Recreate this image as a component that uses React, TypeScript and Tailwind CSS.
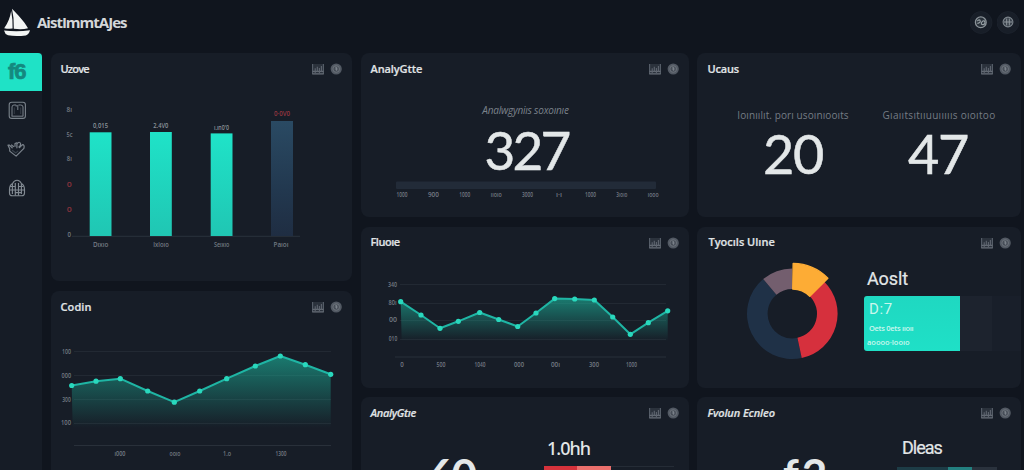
import React from "react";

type Point = [number, number];

const CardIcons = () => (
  <svg width="30" height="12" viewBox="0 0 30 12" className="shrink-0">
    <path d="M0 1h12v10.5H0Z" fill="#2b323c" />
    <path d="M.6 1v10M11.4 1v10" stroke="#58606a" strokeWidth="1.1" />
    <path d="M.5 8.4h11M.3 10.9h11.4" stroke="#646b74" strokeWidth="1.1" />
    <path d="M3.2 10V5.2M5.3 9V3.8M7.4 10V5M9.4 9V3" stroke="#5f6670" strokeWidth="1.1" />
    <circle cx="24.2" cy="6" r="5.6" fill="#525963" />
    <circle cx="24.2" cy="6" r="3.3" fill="#474e58" stroke="#737a82" strokeWidth=".8" />
    <path d="M23.2 4.2h1.4v3.6M23 6h2.6" stroke="#868d94" strokeWidth=".8" fill="none" />
  </svg>
);

function Card({
  title,
  className = "",
  titleClass = "",
  children,
}: {
  title: string;
  className?: string;
  titleClass?: string;
  children: React.ReactNode;
}) {
  return (
    <section className={`flex shrink-0 flex-col overflow-hidden rounded-lg bg-[#171d27] ${className}`}>
      <header className="flex h-8 shrink-0 items-center justify-between pr-[10px] pl-[9.5px]">
        <h2 className={`font-['Open_Sans',sans-serif] text-[11px] leading-4 font-semibold whitespace-nowrap text-[#e0e4e6] [-webkit-text-stroke:0.2px_#e0e4e6] ${titleClass}`}>
          {title}
        </h2>
        <CardIcons />
      </header>
      {children}
    </section>
  );
}

function Label({
  x,
  y,
  w,
  children,
  fill = "#737a83",
}: {
  x: number;
  y: number;
  w: number;
  children: string;
  fill?: string;
}) {
  return (
    <text
      x={x - w / 2}
      y={y + 2.3}
      textLength={w}
      lengthAdjust="spacingAndGlyphs"
      fontSize="6.5"
      fontWeight="600"
      fontFamily="Open Sans, sans-serif"
      fill={fill}
    >
      {children}
    </text>
  );
}

function AreaLine({ points, base, id }: { points: Point[]; base: number; id: string }) {
  const line = points.map((p) => p.join(",")).join(" ");
  const first = points[0][0] + 1;
  const last = points[points.length - 1][0];
  const top = Math.min(...points.map((p) => p[1]));
  return (
    <g>
      <defs>
        <linearGradient id={id} gradientUnits="userSpaceOnUse" x1="0" x2="0" y1={top} y2={base}>
          <stop offset="0" stopColor="#1cb89f" stopOpacity=".6" />
          <stop offset=".55" stopColor="#1cb89f" stopOpacity=".27" />
          <stop offset="1" stopColor="#1cb89f" stopOpacity="0" />
        </linearGradient>
      </defs>
      <polygon points={`${first},${base} ${line} ${last},${base}`} fill={`url(#${id})`} />
      <polyline points={line} fill="none" stroke="#1fb5a4" strokeWidth="2" strokeLinejoin="round" />
      {points.map(([x, y]) => (
        <circle key={x} cx={x} cy={y} r="2.6" fill="#29d8bd" />
      ))}
    </g>
  );
}

const bars = [
  { x: 89.7, y: 132.3, value: "0,015", label: "Dıxıo" },
  { x: 150, y: 132, value: "2.4V0", label: "Ixloıo" },
  { x: 210.7, y: 133.4, value: "ı.ın0'0", label: "Seıxıo" },
];

function BarChart() {
  return (
    <svg width="301" height="196" viewBox="51 85 301 196">
      <defs>
        <linearGradient id="teal" x1="0" x2="0" y1="0" y2="1">
          <stop offset="0" stopColor="#1fe3c8" />
          <stop offset="1" stopColor="#20c6b3" />
        </linearGradient>
        <linearGradient id="navy" x1="0" x2="0" y1="0" y2="1">
          <stop offset="0" stopColor="#2a4a63" />
          <stop offset=".6" stopColor="#22384f" />
          <stop offset="1" stopColor="#1f2d42" />
        </linearGradient>
      </defs>
      <path d="M72 236.3H300" stroke="#2a323d" />
      <Label x={69.3} y={109.8} w={5.5}>8ı</Label>
      <Label x={69.5} y={134.4} w={6}>5c</Label>
      <Label x={69.3} y={158.8} w={5}>8ı</Label>
      <Label x={69.3} y={184.6} w={5} fill="#87323c">0</Label>
      <Label x={69.3} y={209.8} w={5} fill="#87323c">0</Label>
      <Label x={69.3} y={235} w={3.5}>0</Label>
      {bars.map((b) => (
        <g key={b.x}>
          <rect x={b.x} y={b.y} width="21.8" height={236 - b.y} fill="url(#teal)" />
          <Label x={b.x + 10.8} y={b.y - 6.2} w={15} fill="#8b9299">{b.value}</Label>
          <Label x={b.x + 11} y={244.6} w={15.5}>{b.label}</Label>
        </g>
      ))}
      <rect x="271" y="121" width="22" height="115" fill="url(#navy)" />
      <Label x={282} y={113.3} w={16} fill="#943640">0·0V0</Label>
      <Label x={281} y={244.6} w={15}>Paıoı</Label>
    </svg>
  );
}

const codinPoints: Point[] = [
  [71.7, 385.5], [96, 381.2], [120.3, 378.7], [147.7, 391], [174.3, 402.2], [199.7, 391],
  [226.7, 378.7], [255.3, 366], [280.3, 356], [305.3, 364.7], [330.7, 374.3],
];

function CodinChart() {
  return (
    <svg width="301" height="147" viewBox="51 323 301 147">
      <path d="M74 351.5H331M74 375.5H331M74 399.5H331M74 423.5H331" stroke="#222933" />
      <path d="M74 445.5H331" stroke="#29303a" />
      <AreaLine points={codinPoints} base={428} id="codin-area" />
      <Label x={66.5} y={351.3} w={9}>100</Label>
      <Label x={66.3} y={375.3} w={9.5}>000</Label>
      <Label x={66.5} y={399.3} w={8.5}>300</Label>
      <Label x={66} y={423} w={10}>100</Label>
      <Label x={120} y={453.5} w={11}>ı000</Label>
      <Label x={175} y={453.5} w={11}>ooıo</Label>
      <Label x={227} y={453.5} w={8}>1.o</Label>
      <Label x={281} y={453.5} w={11}>1300</Label>
    </svg>
  );
}

const fluorePoints: Point[] = [
  [400.7, 301.7], [421, 315], [440, 328.3], [458.3, 321.3], [479.7, 312.5], [498.7, 319.5],
  [517.7, 326.5], [536, 313], [554.7, 298.6], [574.7, 299], [594.3, 300], [612.7, 317],
  [630.3, 334.3], [648.3, 322.7], [667.7, 310.8],
];

function FluoreChart() {
  return (
    <svg width="328" height="129" viewBox="361 259 328 129">
      <path d="M400 284.5H666M400 303.5H666M400 320.5H666M400 339.5H666" stroke="#222933" />
      <path d="M395 357H666" stroke="#232a34" strokeWidth="1.5" />
      <AreaLine points={fluorePoints} base={341} id="fluore-area" />
      <Label x={392.5} y={284.7} w={9}>340</Label>
      <Label x={392.5} y={302.7} w={8}>80ı</Label>
      <Label x={393} y={319.7} w={8}>00</Label>
      <Label x={393} y={338.7} w={8.5}>010</Label>
      <Label x={402} y={364.6} w={3.5}>0</Label>
      <Label x={441} y={364.6} w={9}>500</Label>
      <Label x={480} y={364.6} w={11}>1040</Label>
      <Label x={519} y={364.6} w={10}>000</Label>
      <Label x={555.5} y={364.6} w={9}>00ı</Label>
      <Label x={594} y={364.6} w={10}>300</Label>
      <Label x={631.5} y={364.6} w={11}>1000</Label>
    </svg>
  );
}

function arc(from: number, to: number, outer: number, inner = 24.7) {
  const at = (deg: number, r: number) => {
    const a = (deg * Math.PI) / 180;
    return `${46.3 + r * Math.sin(a)} ${51.7 - r * Math.cos(a)}`;
  };
  const large = to - from > 180 ? 1 : 0;
  return `M${at(from, outer)}A${outer} ${outer} 0 ${large} 1 ${at(to, outer)}L${at(to, inner)}A${inner} ${inner} 0 ${large} 0 ${at(from, inner)}Z`;
}

function Donut() {
  return (
    <svg width="94" height="100" viewBox="0 0 94 100">
      <path d={arc(168, 320, 45.3)} fill="#1f3147" />
      <path d={arc(320, 360, 45.3)} fill="#735e6e" />
      <path d={arc(45, 168, 45.3)} fill="#d6303d" />
      <path d={arc(1, 45, 50.3)} fill="#fdac35" stroke="#fdac35" strokeWidth="1.4" strokeLinejoin="round" />
    </svg>
  );
}

const ticks = ["1000", "900", "1000", "ııoıo", "3000", "ı·ı", "1000", "3ıoıo", "ıooo"];

export default function App() {
  return (
    <div className="flex h-[470px] w-[1024px] flex-col overflow-hidden bg-[#10151e] font-['Open_Sans',sans-serif] text-[#e3e7e8]">
      <header className="flex h-[53px] shrink-0 items-start justify-between pt-[8px] pr-[4px] pl-[3px]">
        <div className="flex items-center">
          <svg width="28" height="29" viewBox="0 0 28 29">
            <path d="M9 .8C14 6 21 13 25 20.3Q19 22 10.8 20.8Q11.2 10 9 .8Z" fill="#f3f5f4" />
            <path d="M8.2 3Q10 13 9.6 20.6Q5 21 1.2 20.2Q6.5 13 8.2 3Z" fill="#f3f5f4" />
            <path d="M1 22.4Q14 24 27 22.2Q25.8 26.5 22.8 27.4Q12.5 28.6 5 27.2Q1.8 26 1 22.4Z" fill="#f3f5f4" />
          </svg>
          <h1 className="-mt-[2px] ml-[6px] text-[15px] leading-5 font-bold tracking-[-1px] text-[#d4d7d9]">AistImmtAJes</h1>
        </div>
        <div className="flex gap-[4px] pt-[3px]">
          <svg width="23" height="23" viewBox="0 0 23 23">
            <circle cx="11" cy="11.5" r="11" fill="#181e28" stroke="#202630" strokeWidth=".6" />
            <circle cx="10.8" cy="11.3" r="5.4" fill="#29313a" stroke="#8b9399" strokeWidth="1.3" />
            <path d="M7.3 10.2c1.5-2 2.8-1.5 3 .2s-2 1.5-3 2M11.3 13.3c0-3 3-4.8 3.6-2.2s-2 2.8-3.6 2.2" fill="none" stroke="#969fa4" strokeWidth="1.2" />
          </svg>
          <svg width="23" height="23" viewBox="0 0 23 23">
            <circle cx="11" cy="11.5" r="11" fill="#181e28" stroke="#202630" strokeWidth=".6" />
            <circle cx="11" cy="11" r="4.9" fill="#39414b" stroke="#7e868d" strokeWidth="1.1" />
            <path d="M7 11h8M9.7 7.5v7M12.3 7.5v7" stroke="#8e969c" strokeWidth="1" fill="none" />
          </svg>
        </div>
      </header>

      <div className="flex min-h-0 flex-1">
        <nav className="flex w-[42px] shrink-0 flex-col bg-[#161c26]">
          <div className="flex h-[38px] items-center rounded-tr bg-[#1fe2c6] pl-[8px]">
            <span className="font-['Liberation_Sans',sans-serif] text-[22px] leading-6 font-bold tracking-[-1px] text-[#14897f] [-webkit-text-stroke:0.7px_#14897f]">f6</span>
          </div>
          <div className="flex h-[39px] items-center pl-[8px]">
            <svg width="19" height="19" viewBox="0 0 19 19" fill="none" stroke="#7a828b">
              <rect x="1.2" y="1.2" width="16.2" height="16.2" rx="2.5" strokeWidth="1.1" />
              <path d="M4 15V6Q4 4 6 4h2.2v1.6M10.5 4h2.2Q15 4 15 6v9M3.5 15.2h11.8M9.8 4v5" strokeWidth="1" />
              <path d="M6.3 13V6.5M12.7 13V6.5" stroke="#353d47" />
            </svg>
          </div>
          <div className="flex h-[39px] items-center pl-[7px]">
            <svg width="19" height="18" viewBox="0 0 19 18" fill="none" stroke="#7a828b" strokeWidth="1.2" strokeLinecap="round" strokeLinejoin="round" className="-mt-[2px]">
              <path d="M1 5.2l1.7 3.6v2.3l6.4 5 7.8-7.8Q17.8 4.8 15.5 4.7l-3 3M1 5.2h1.5l2.7 2.6M4.5 5l2 1.5M8 6.3V3.6l1.7-.8M9.9 7.8V4q2.5-3.2 3.6-.6Q14 6 11.8 7" />
              <path d="M5.5 10.5l3.3 2.4 2-1.8" stroke="#38414b" />
            </svg>
          </div>
          <div className="flex h-[39px] items-center pl-[8px]">
            <svg width="18" height="18" viewBox="0 0 18 18" fill="none" stroke="#828a92" strokeWidth="1.15" className="-mt-[2px]">
              <path d="M1.5 10.5Q1.4 6 4.7 4.4Q6 1.2 9 1.2t4.3 3.2Q16.5 6 16.5 10.5v3.4q0 2.8-2.8 2.8H4.3q-2.8 0-2.8-2.8Z" />
              <path d="M4.4 5v10M7.3 4v12.5M10.5 4v12.5M13.4 5v10M2 7.5h5.2M10.5 7.5h5M2 11h14M7.3 13.6h6" />
            </svg>
          </div>
        </nav>

        <main className="flex min-w-0 flex-1 items-start overflow-hidden pl-[9px]">
          <div className="mr-[9px] flex w-[301px] flex-col gap-[10px]">
            <Card title="Uzove" className="h-[228px]" titleClass="tracking-[-0.8px]">
              <BarChart />
            </Card>
            <Card title="Codin" className="h-[190px]" titleClass="tracking-[0.1px]">
              <CodinChart />
            </Card>
          </div>

          <div className="mr-[8px] flex w-[328px] flex-col">
            <Card title="AnalyGtte" className="h-[164px]" titleClass="tracking-[-0.1px]">
              <div className="flex flex-col items-center">
                <p className="mt-[18px] ml-[1px] text-[10px] leading-[14px] font-medium tracking-[-0.2px] text-[#7b828b] italic">Analwgyniıs soxoınıe</p>
                <p className="mt-[3px] ml-[3px] h-[60px] font-['Lato',sans-serif] text-[53px] leading-[60px] tracking-[-2.8px] [-webkit-text-stroke:0.5px_#e3e7e8]">327</p>
              </div>
              <svg width="328" height="30" viewBox="361 178 328 30">
                <rect x="396" y="179.5" width="260" height="7.5" rx="1" fill="#222b38" />
                {ticks.map((t, i) => (
                  <Label key={i} x={402 + i * 31.4} y={192.5} w={i === 5 ? 6 : 11}>{t}</Label>
                ))}
              </svg>
            </Card>
            <Card title="Fluoıe" className="mt-[10px] h-[161px]" titleClass="tracking-[-0.5px] -mt-[2px]">
              <FluoreChart />
            </Card>
            <Card title="AnalyGtıe" className="mt-[9px] h-[100px]" titleClass="tracking-[-0.3px] italic">
              <div className="flex">
                <p className="mt-[15px] ml-[67px] w-[116px] font-['Lato',sans-serif] text-[44px] leading-[60px] font-bold tracking-[-2px]">60</p>
                <div className="flex w-[130px] flex-col">
                  <p className="mt-[7px] ml-[3px] font-['Noto_Sans',sans-serif] text-[18px] leading-6 font-medium tracking-[-1px]">1.0hh</p>
                  <div className="mt-[6px] flex h-[12px] border-t border-[#252c36]">
                    <span className="-mt-px w-[33px] bg-[#d5323b]" />
                    <span className="-mt-px w-[34px] bg-[#eb706d]" />
                  </div>
                </div>
              </div>
            </Card>
          </div>

          <div className="flex w-[324px] flex-col">
            <Card title="Ucaus" className="h-[164px]" titleClass="tracking-[-0.2px] ml-[1px]">
              <div className="flex">
                <div className="ml-[31px] flex w-[130px] flex-col items-center">
                  <p className="mt-[23px] text-[10px] leading-[14px] font-medium tracking-[0.1px] whitespace-nowrap text-[#757c85]">Ioınıılıt. porı usoınıooıts</p>
                  <p className="mt-[2px] font-['Lato',sans-serif] text-[54px] leading-[60px] tracking-[-1.2px] [-webkit-text-stroke:0.5px_#e3e7e8]">20</p>
                </div>
                <div className="ml-[16px] flex w-[130px] flex-col items-center">
                  <p className="mt-[23px] text-[10px] leading-[14px] font-medium tracking-[0.3px] whitespace-nowrap text-[#757c85]">Gıaııtsıtııuuıııııs oıoıtoo</p>
                  <p className="mt-[2px] -ml-[2px] font-['Lato',sans-serif] text-[54px] leading-[60px] tracking-[-1.2px] [-webkit-text-stroke:0.5px_#e3e7e8]">47</p>
                </div>
              </div>
            </Card>
            <Card title="Tyocıls Ulıne" className="mt-[10px] h-[161px]" titleClass="ml-[2px] -mt-[2px]">
              <div className="flex items-start">
                <div className="mt-[3px] ml-[49px] w-[94px]">
                  <Donut />
                </div>
                <div className="ml-[24px] flex w-[157px] flex-col">
                  <p className="mt-[8px] ml-[3px] font-['Roboto',sans-serif] text-[18px] leading-6 tracking-[-0.1px] [-webkit-text-stroke:0.2px_#e3e7e8]">Aoslt</p>
                  <div className="mt-[4.5px] flex h-[55.5px]">
                    <div className="flex w-[96px] flex-col rounded-l-[3px] bg-gradient-to-b from-[#1fd8c1] to-[#1fe0c7] pl-[3px] text-[#c9f7ed]">
                      <span className="mt-[5px] ml-[2px] font-['Roboto',sans-serif] text-[15px] leading-[17px] tracking-[0.6px]">D:7</span>
                      <span className="mt-[4px] ml-[2px] text-[7.5px] leading-[12px] font-semibold tracking-[-0.3px]">Oets 0ets ııoıı</span>
                      <span className="mt-[2px] text-[7.5px] leading-[12px] font-semibold">aoooo·looıo</span>
                    </div>
                    <div className="w-[32px] bg-[#1d232e]" />
                    <div className="flex-1 bg-[#191f2a]" />
                  </div>
                </div>
              </div>
            </Card>
            <Card title="Fvolun Ecnleo" className="mt-[9px] h-[100px]" titleClass="ml-[1px] tracking-[-0.1px] italic">
              <div className="flex">
                <p className="mt-[15px] ml-[86px] w-[117px] font-['Lato',sans-serif] text-[44px] leading-[60px] font-bold tracking-[3px]">f2</p>
                <div className="flex w-[100px] flex-col">
                  <p className="mt-[7px] ml-[2px] font-['Roboto',sans-serif] text-[18px] leading-6 tracking-[-1px] [-webkit-text-stroke:0.2px_#e3e7e8]">Dleas</p>
                  <div className="mt-[7px] -ml-[3px] flex h-[12px]">
                    <span className="w-[51px] bg-[#1d3c46]" />
                    <span className="w-[24px] bg-[#238080]" />
                    <span className="w-[25px] bg-[#2a323d]" />
                  </div>
                </div>
              </div>
            </Card>
          </div>
        </main>
      </div>
    </div>
  );
}
